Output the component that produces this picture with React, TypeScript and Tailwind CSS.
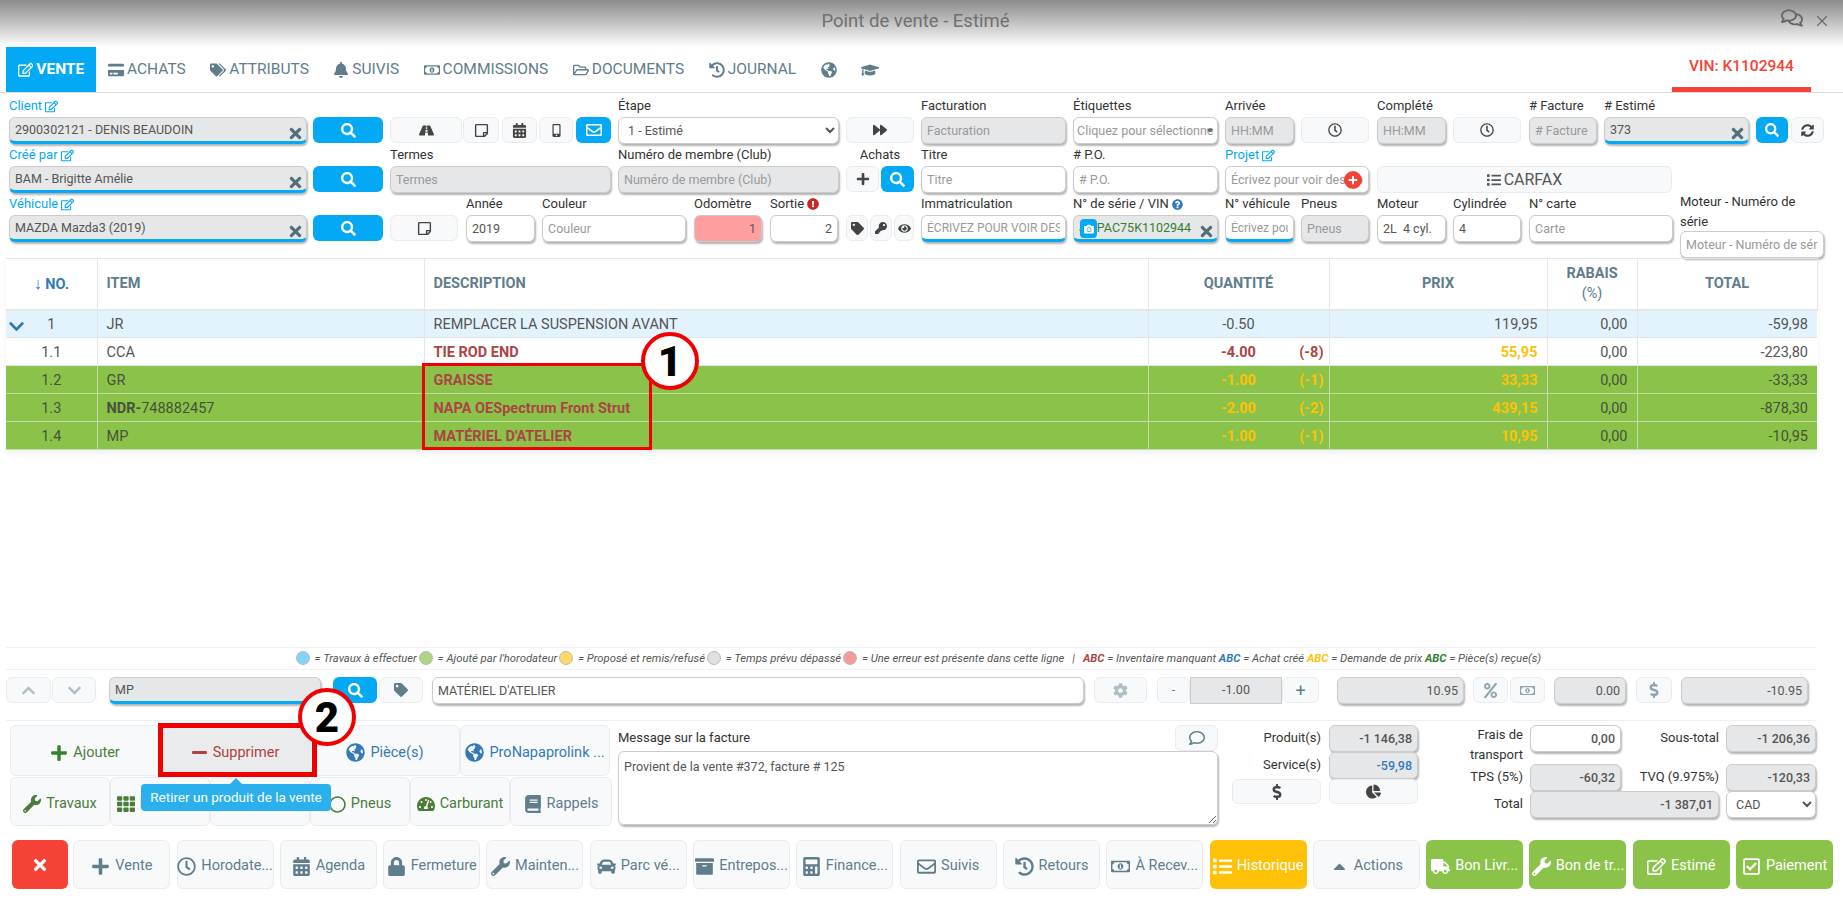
import type { ReactNode } from "react";
import { X } from "lucide-react";
import {
  FaArchive, FaBell, FaBook, FaCalculator, FaCalendarAlt, FaCamera, FaCar, FaCaretDown, FaCaretUp, FaChartPie,
  FaChevronDown, FaChevronUp, FaCog, FaCreditCard, FaDollarSign, FaExclamationCircle, FaEye, FaForward,
  FaGlobeAmericas, FaGraduationCap, FaHistory, FaKey, FaList, FaLock, FaMinus, FaMobileAlt, FaPercent,
  FaPlus, FaQuestionCircle, FaRegCheckSquare, FaRegCircle, FaRegClock, FaRegComment, FaRegComments,
  FaRegEdit, FaRegEnvelope, FaRegFolderOpen, FaRegMoneyBillAlt, FaRegStickyNote, FaRoad, FaSearch,
  FaSyncAlt, FaTachometerAlt, FaTag, FaTags, FaTh, FaTimes, FaTruck, FaWrench,
} from "react-icons/fa";

const inputBare =
  "block h-[27px] rounded-[6px] border border-[#ccc] shadow-[1px_2px_2px_rgba(0,0,0,0.3)] px-[5px] text-[12.5px] text-[#555] placeholder:text-[#999] outline-none";
const inputCls = `${inputBare} w-full`;
const grayCls = "bg-[#e6e7e9]";
const btnCls =
  "flex items-center justify-center rounded-[6px] border border-[#e9ecef] bg-[#f8f9fa] text-[#444]";
const blueBtn = "flex items-center justify-center rounded-[6px] bg-[#03a9f4] text-white";

function Field({ label, className, children }: { label?: ReactNode; className: string; children: ReactNode }) {
  return (
    <div className={className}>
      <div className="h-[22px] text-[13px] leading-[22px] text-[#333] whitespace-nowrap">{label}</div>
      {children}
    </div>
  );
}

function LinkLabel({ text }: { text: string }) {
  return (
    <span className="inline-flex items-center gap-[3px] text-[#03a9f4]">
      {text} <FaRegEdit className="text-[13px]" />
    </span>
  );
}

function Picker({ value }: { value: string }) {
  return (
    <div className="relative">
      <input readOnly value={value} className={`${inputCls} ${grayCls} border-b-[3px] border-b-[#03a9f4] pr-[22px]`} />
      <FaTimes className="absolute right-[3px] top-[8px] text-[17px] text-[#546e7a]" />
    </div>
  );
}

function Tab({ icon, label }: { icon: ReactNode; label?: string }) {
  return (
    <div className="flex items-center gap-[3px] text-[15.5px] text-[#607d8b] whitespace-nowrap">
      <span className="text-[16px]">{icon}</span>
      {label}
    </div>
  );
}

type Line = {
  no: string;
  item: ReactNode;
  desc: string;
  qty: string;
  extra?: string;
  price: string;
  total: string;
  tone: "blue" | "white" | "green";
};

const lines: Line[] = [
  { no: "1", item: "JR", desc: "REMPLACER LA SUSPENSION AVANT", qty: "-0.50", price: "119,95", total: "-59,98", tone: "blue" },
  { no: "1.1", item: "CCA", desc: "TIE ROD END", qty: "-4.00", extra: "(-8)", price: "55,95", total: "-223,80", tone: "white" },
  { no: "1.2", item: "GR", desc: "GRAISSE", qty: "-1.00", extra: "(-1)", price: "33,33", total: "-33,33", tone: "green" },
  { no: "1.3", item: <><b>NDR-</b>748882457</>, desc: "NAPA OESpectrum Front Strut", qty: "-2.00", extra: "(-2)", price: "439,15", total: "-878,30", tone: "green" },
  { no: "1.4", item: "MP", desc: "MATÉRIEL D'ATELIER", qty: "-1.00", extra: "(-1)", price: "10,95", total: "-10,95", tone: "green" },
];

function LinesTable() {
  return (
    <table className="ml-[6px] w-[1811px] table-fixed border-collapse text-[14.5px] text-[#555] shadow-[0_4px_6px_rgba(0,0,0,0.06)]">
      <colgroup>
        <col className="w-[91px]" />
        <col className="w-[327px]" />
        <col className="w-[724px]" />
        <col className="w-[181px]" />
        <col className="w-[218px]" />
        <col className="w-[90px]" />
        <col className="w-[180px]" />
      </colgroup>
      <thead>
        <tr className="h-[51px] border-t border-b-[2px] border-[#e4e7ea] text-[14.5px] font-bold text-[#607d8b]">
          <th className="border-r border-[#e4e7ea] text-center font-bold">
            <span className="text-[#337ab7]"><span className="font-normal text-[16px]">↓</span> NO.</span>
          </th>
          <th className="border-r border-[#e4e7ea] px-[9px] text-left font-bold">ITEM</th>
          <th className="border-r border-[#e4e7ea] px-[9px] text-left font-bold">DESCRIPTION</th>
          <th className="border-r border-[#e4e7ea] text-center font-bold">QUANTITÉ</th>
          <th className="border-r border-[#e4e7ea] text-center font-bold">PRIX</th>
          <th className="border-r border-[#e4e7ea] text-center font-bold leading-[20px]">
            RABAIS<br /><span className="font-normal">(%)</span>
          </th>
          <th className="border-r border-[#e4e7ea] text-center font-bold">TOTAL</th>
        </tr>
      </thead>
      <tbody className="[&_td]:pt-[2px]">
        {lines.map((l) => {
          const green = l.tone === "green";
          const rowBg = green ? "bg-[#8bc34a] border-[#c5dca8] text-[#47513b]" : l.tone === "blue" ? "bg-[#e3f3fd] border-[#dfe5ea]" : "bg-white border-[#dfe5ea]";
          const cellLine = green ? "border-r border-[#c5dca8]" : "border-r border-[#e4e7ea]";
          const redDesc = l.tone !== "blue";
          return (
            <tr key={l.no} className={`h-[28px] border-b ${rowBg}`}>
              <td className={`relative ${cellLine} text-center`}>
                {l.tone === "blue" && <FaChevronDown className="absolute left-[2px] top-[7px] text-[17px] text-[#2a7ab8]" />}
                {l.no}
              </td>
              <td className={`${cellLine} px-[9px]`}>{l.item}</td>
              <td className={`${cellLine} px-[9px] ${redDesc ? "font-bold text-[#ab4545]" : ""}`}>{l.desc}</td>
              <td className={`${cellLine} pr-[5px] pl-[5px]`}>
                <div className={`grid grid-cols-[1fr_auto_1fr] ${l.extra ? (green ? "font-bold text-[#ffc107]" : "font-bold text-[#ab4545]") : ""}`}>
                  <span />
                  <span>{l.qty}</span>
                  <span className="justify-self-end">{l.extra}</span>
                </div>
              </td>
              <td className={`${cellLine} px-[9px] text-right ${l.extra ? "font-bold text-[#ffc107]" : ""}`}>{l.price}</td>
              <td className={`${cellLine} px-[9px] text-right`}>0,00</td>
              <td className="px-[9px] text-right">{l.total}</td>
            </tr>
          );
        })}
      </tbody>
    </table>
  );
}

function Legend() {
  const dot = "inline-block w-[14px] h-[14px] rounded-full border border-[#bbb] mx-[2px] align-[-3px]";
  return (
    <div className="mt-auto ml-[6px] h-[23px] w-[1811px] border-y border-[#f0f0f0] pl-[12px] text-center text-[11.3px] leading-[21px] italic text-[#555]">
      <span className={`${dot} bg-[#81d4fa]`} /> = Travaux à effectuer
      <span className={`${dot} bg-[#aed581]`} /> = Ajouté par l'horodateur
      <span className={`${dot} bg-[#ffd966]`} /> = Proposé et remis/refusé
      <span className={`${dot} bg-[#e0e0e0]`} /> = Temps prévu dépassé
      <span className={`${dot} bg-[#f59a9a]`} /> = Une erreur est présente dans cette ligne
      <span className="mx-[8px]">|</span>
      <b className="text-[#ab4545]">ABC</b> = Inventaire manquant <b className="text-[#337ab7]">ABC</b> = Achat créé{" "}
      <b className="text-[#ffc107]">ABC</b> = Demande de prix <b className="text-[#33802f]">ABC</b> = Pièce(s) reçue(s)
    </div>
  );
}

function ItemRow() {
  const right = `${inputBare} ${grayCls} text-right`;
  return (
    <div className="mt-[7px] flex h-[27px] items-start pl-[6px] text-[12.5px] [&>*]:shrink-0">
      <div className={`${btnCls} h-[26px] w-[45px] text-[15px] !text-[#b0bec5]`}><FaChevronUp /></div>
      <div className={`${btnCls} ml-px h-[26px] w-[44px] text-[15px] !text-[#b0bec5]`}><FaChevronDown /></div>
      <input readOnly value="MP" className={`${inputBare} ${grayCls} ml-[13px] w-[212px] border-b-[3px] border-b-[#03a9f4]`} />
      <div className={`${blueBtn} ml-[12px] h-[26px] w-[44px] text-[15px]`}><FaSearch /></div>
      <div className={`${btnCls} ml-[2px] h-[26px] w-[44px] text-[14px] !text-[#607d8b]`}><FaTag /></div>
      <input readOnly value="MATÉRIEL D'ATELIER" className={`${inputBare} ml-[9px] w-[652px] bg-white`} />
      <div className={`${btnCls} ml-[10px] h-[26px] w-[53px] text-[15px] !text-[#b0bec5]`}><FaCog /></div>
      <div className={`${btnCls} ml-[10px] h-[26px] w-[33px] !text-[#607d8b]`}>-</div>
      <div className="flex h-[27px] w-[92px] items-center justify-center border border-[#ccc] bg-[#e6e7e9] text-[#555]">-1.00</div>
      <div className={`${btnCls} h-[26px] w-[37px] text-[18px] !text-[#607d8b]`}>+</div>
      <input readOnly value="10.95" className={`${right} ml-[18px] w-[127px]`} />
      <div className={`${btnCls} ml-[9px] h-[26px] w-[35px] text-[15px] !text-[#90a4ae]`}><FaPercent /></div>
      <div className={`${btnCls} ml-[2px] h-[26px] w-[35px] text-[15px] !text-[#90a4ae]`}><FaRegMoneyBillAlt /></div>
      <input readOnly value="0.00" className={`${right} ml-[9px] w-[72px]`} />
      <div className={`${btnCls} ml-[10px] h-[26px] w-[36px] text-[16px] !text-[#90a4ae]`}><FaDollarSign /></div>
      <input readOnly value="-10.95" className={`${right} ml-[9px] w-[127px]`} />
    </div>
  );
}

function ActionBtn({ icon, label, className }: { icon: ReactNode; label: string; className: string }) {
  return (
    <div className={`${btnCls} gap-[5px] whitespace-nowrap text-[14.5px] ${className}`}>
      {icon}
      {label}
    </div>
  );
}

function ProductPanel() {
  const green = "h-full w-[100px] pt-[5px] !text-[#4a7c3a]";
  const wide = "h-full w-[150px] pt-[4px]";
  return (
    <div className="ml-[10px] w-[602px]">
      <div className="flex h-[51px]">
        <ActionBtn className={`${wide} !text-[#4a7c3a]`} icon={<FaPlus className="text-[18px] text-[#33802f]" />} label="Ajouter" />
        <ActionBtn className={`${wide} !bg-[#e9ebed] !text-[#b0413e]`} icon={<FaMinus className="text-[17px]" />} label="Supprimer" />
        <ActionBtn className={`${wide} !text-[#337ab7]`} icon={<FaGlobeAmericas className="text-[19px]" />} label="Pièce(s)" />
        <ActionBtn className={`${wide} !text-[#337ab7]`} icon={<FaGlobeAmericas className="text-[19px]" />} label="ProNapaprolink ..." />
      </div>
      <div className="mt-px flex h-[49px]">
        <ActionBtn className={green} icon={<FaWrench className="text-[18px]" />} label="Travaux" />
        <ActionBtn className={green} icon={<FaTh className="text-[18px]" />} label="Ensemb..." />
        <ActionBtn className={green} icon={<FaCar className="text-[18px]" />} label="Véhicul..." />
        <ActionBtn className={green} icon={<FaRegCircle className="text-[17px]" />} label="Pneus" />
        <ActionBtn className={green} icon={<FaTachometerAlt className="text-[18px]" />} label="Carburant" />
        <ActionBtn className="h-full w-[102px] pt-[5px] !text-[#607d8b]" icon={<FaBook className="text-[18px]" />} label="Rappels" />
      </div>
    </div>
  );
}

function MessagePanel() {
  return (
    <div className="ml-[6px] w-[600px]">
      <div className="flex h-[26px] items-center justify-between">
        <span className="text-[13px] text-[#333]">Message sur la facture</span>
        <div className={`${btnCls} h-[26px] w-[43px] text-[16px] !text-[#607d8b]`}><FaRegComment /></div>
      </div>
      <textarea
        readOnly
        value="Provient de la vente #372, facture # 125"
        className="block h-[74px] w-full resize-y rounded-[6px] border border-[#ccc] px-[5px] py-[6px] text-[12.5px] text-[#555] shadow-[1px_2px_2px_rgba(0,0,0,0.3)] outline-none"
      />
    </div>
  );
}

function TotalsPanel() {
  const val = `${inputCls} ${grayCls} text-right font-medium`;
  const lbl = "text-right text-[13px] text-[#333]";
  return (
    <>
      <div className="ml-[14px] grid w-[186px] grid-cols-[89px_89px] content-start gap-x-[8px] text-[13px]">
        <div className={`${lbl} leading-[26px]`}>Produit(s)</div>
        <input readOnly value="-1 146,38" className={val} />
        <div className={`${lbl} leading-[26px]`}>Service(s)</div>
        <input readOnly value="-59,98" className={`${val} !text-[#337ab7]`} />
        <div className={`${btnCls} h-[25px] text-[16px]`}><FaDollarSign /></div>
        <div className={`${btnCls} h-[25px] text-[15px]`}><FaChartPie /></div>
      </div>
      <div className="ml-[27px] grid grid-cols-[78px_91px_91px_90px] grid-rows-[39px_27px_27px] gap-x-[7px] text-[13px]">
        <div className={`${lbl} leading-[20px]`}>Frais de transport</div>
        <input readOnly value="0,00" className={`${inputCls} bg-white text-right font-medium`} />
        <div className={`${lbl} leading-[26px]`}>Sous-total</div>
        <input readOnly value="-1 206,36" className={val} />
        <div className={`${lbl} leading-[26px]`}>TPS (5%)</div>
        <input readOnly value="-60,32" className={val} />
        <div className={`${lbl} leading-[26px]`}>TVQ (9.975%)</div>
        <input readOnly value="-120,33" className={val} />
        <div className={`${lbl} leading-[26px]`}>Total</div>
        <input readOnly value="-1 387,01" className={`${val} col-span-2`} />
        <select className={`${inputCls} bg-white`}><option>CAD</option></select>
      </div>
    </>
  );
}

function ToolBtn({ icon, label, tone = "plain", w = "w-[97px]" }: { icon: ReactNode; label: string; tone?: "plain" | "green" | "amber"; w?: string }) {
  const colors =
    tone === "green"
      ? "bg-[#8bc34a] text-white"
      : tone === "amber"
        ? "bg-[#ffc107] text-white"
        : "border border-[#e9ecef] bg-[#f8f9fa] text-[#607d8b]";
  return (
    <div className={`flex h-[49px] items-center justify-center gap-[5px] whitespace-nowrap rounded-[6px] pt-[3px] text-[14.5px] ${w} ${colors}`}>
      <span className="text-[19px]">{icon}</span>
      {label}
    </div>
  );
}

function Toolbar() {
  return (
    <div className="mt-[14px] flex h-[49px] gap-[6.3px] pl-[12px]">
      <div className="mr-[-1px] flex h-[49px] w-[56px] items-center justify-center rounded-[6px] bg-[#f44336] text-[18px] text-white"><FaTimes /></div>
      <ToolBtn icon={<FaPlus />} label="Vente" />
      <ToolBtn icon={<FaRegClock />} label="Horodate..." />
      <ToolBtn icon={<FaCalendarAlt />} label="Agenda" />
      <ToolBtn icon={<FaLock />} label="Fermeture" />
      <ToolBtn icon={<FaWrench />} label="Mainten..." />
      <ToolBtn icon={<FaCar />} label="Parc vé..." />
      <ToolBtn icon={<FaArchive />} label="Entrepos..." />
      <ToolBtn icon={<FaCalculator />} label="Finance..." />
      <ToolBtn icon={<FaRegEnvelope />} label="Suivis" />
      <ToolBtn icon={<FaHistory />} label="Retours" />
      <ToolBtn icon={<FaRegMoneyBillAlt />} label="À Recev..." />
      <ToolBtn icon={<FaList />} label="Historique" tone="amber" />
      <ToolBtn icon={<FaCaretUp />} label="Actions" w="w-[107px]" />
      <ToolBtn icon={<FaTruck />} label="Bon Livr..." tone="green" />
      <ToolBtn icon={<FaWrench />} label="Bon de tr..." tone="green" />
      <ToolBtn icon={<FaRegEdit />} label="Estimé" tone="green" />
      <ToolBtn icon={<FaRegCheckSquare />} label="Paiement" tone="green" />
    </div>
  );
}

export default function App() {
  const gray = `${inputCls} ${grayCls}`;
  const white = `${inputCls} bg-white`;
  return (
    <div className="relative flex h-[899px] w-[1843px] flex-col overflow-hidden bg-white font-['Roboto',sans-serif]">
      {/* Title bar */}
      <div className="relative flex h-[47px] items-start justify-center bg-gradient-to-b from-[#8c8c8c] to-white pt-[8px] pr-[12px] text-[18.5px] text-[#707070]">
        Point de vente - Estimé
        <div className="absolute right-[12px] top-[7px] flex items-start gap-[10px] text-[#666]">
          <FaRegComments className="text-[22px]" />
          <X className="mt-[5px] h-[18px] w-[18px]" strokeWidth={1.5} />
        </div>
      </div>

      {/* Tabs */}
      <div className="flex h-[46px] items-center border-b-[1px] border-[#ddd] pl-[6px]">
        <div className="flex h-[45px] w-[90px] items-center justify-center gap-[3px] bg-[#03a9f4] pt-[1px] text-[15.5px] font-bold text-white">
          <FaRegEdit /> VENTE
        </div>
        <div className="ml-[12px] flex items-center gap-[24.5px] pt-[1px]">
          <Tab icon={<FaCreditCard />} label="ACHATS" />
          <Tab icon={<FaTags />} label="ATTRIBUTS" />
          <Tab icon={<FaBell />} label="SUIVIS" />
          <Tab icon={<FaRegMoneyBillAlt />} label="COMMISSIONS" />
          <Tab icon={<FaRegFolderOpen />} label="DOCUMENTS" />
          <Tab icon={<FaHistory />} label="JOURNAL" />
          <Tab icon={<FaGlobeAmericas />} />
          <Tab icon={<FaGraduationCap className="text-[18px]" />} />
        </div>
        <div className="ml-auto mr-[32px] flex h-[45px] w-[139px] items-center justify-center border-b-[5px] border-[#f44336] text-[15.5px] font-medium text-[#f44336]">
          VIN: K1102944
        </div>
      </div>

      {/* Form */}
      <div className="mt-[2px] flex h-[49px] items-start pl-[9px]">
        <Field className="w-[298px]" label={<LinkLabel text="Client" />}><Picker value="2900302121 - DENIS BEAUDOIN" /></Field>
        <Field className="ml-[6px] w-[70px]"><div className={`${blueBtn} h-[26px] text-[15px]`}><FaSearch /></div></Field>
        <Field className="ml-[7px] w-[72px]"><div className={`${btnCls} h-[26px] text-[15px]`}><FaRoad /></div></Field>
        <Field className="ml-px w-[36px]"><div className={`${btnCls} h-[26px] text-[15px]`}><FaRegStickyNote /></div></Field>
        <Field className="ml-[3px] w-[35px]"><div className={`${btnCls} h-[26px] text-[15px]`}><FaCalendarAlt /></div></Field>
        <Field className="ml-[2px] w-[34px]"><div className={`${btnCls} h-[26px] text-[13px]`}><FaMobileAlt /></div></Field>
        <Field className="ml-[3px] w-[35px]"><div className={`${blueBtn} h-[26px] text-[16px]`}><FaRegEnvelope /></div></Field>
        <Field className="ml-[7px] w-[221px]" label="Étape"><select className={white}><option>1 - Estimé</option></select></Field>
        <Field className="ml-[7px] w-[68px]"><div className={`${btnCls} h-[26px] text-[14px]`}><FaForward /></div></Field>
        <Field className="ml-[7px] w-[145px]" label="Facturation"><input readOnly placeholder="Facturation" className={gray} /></Field>
        <Field className="ml-[7px] w-[145px]" label="Étiquettes">
          <div className="relative">
            <input readOnly placeholder="Cliquez pour sélectionner" className={`${white} !px-[3px]`} />
            <FaCaretDown className="absolute right-[3px] top-[8px] text-[10px] text-[#666]" />
          </div>
        </Field>
        <Field className="ml-[7px] w-[69px]" label="Arrivée"><input readOnly placeholder="HH:MM" className={gray} /></Field>
        <Field className="ml-[7px] w-[68px]"><div className={`${btnCls} h-[26px] text-[14px]`}><FaRegClock /></div></Field>
        <Field className="ml-[8px] w-[69px]" label="Complété"><input readOnly placeholder="HH:MM" className={gray} /></Field>
        <Field className="ml-[7px] w-[68px]"><div className={`${btnCls} h-[26px] text-[14px]`}><FaRegClock /></div></Field>
        <Field className="ml-[8px] w-[68px]" label="# Facture"><input readOnly placeholder="# Facture" className={gray} /></Field>
        <Field className="ml-[7px] w-[145px]" label="# Estimé"><Picker value="373" /></Field>
        <Field className="ml-[7px] w-[32px]"><div className={`${blueBtn} h-[26px] text-[14px]`}><FaSearch /></div></Field>
        <Field className="ml-[3px] w-[33px]"><div className={`${btnCls} h-[26px] text-[13px]`}><FaSyncAlt /></div></Field>
      </div>
      <div className="flex h-[49px] items-start pl-[9px]">
        <Field className="w-[298px]" label={<LinkLabel text="Créé par" />}><Picker value="BAM - Brigitte Amélie" /></Field>
        <Field className="ml-[6px] w-[70px]"><div className={`${blueBtn} h-[26px] text-[15px]`}><FaSearch /></div></Field>
        <Field className="ml-[7px] w-[221px]" label="Termes"><input readOnly placeholder="Termes" className={gray} /></Field>
        <Field className="ml-[7px] w-[221px]" label="Numéro de membre (Club)"><input readOnly placeholder="Numéro de membre (Club)" className={gray} /></Field>
        <Field className="ml-[7px] w-[68px]" label={<div className="text-center">Achats</div>}>
          <div className="flex gap-[2px]">
            <div className={`${btnCls} h-[26px] w-[33px] text-[14px]`}><FaPlus /></div>
            <div className={`${blueBtn} h-[26px] w-[33px] text-[15px]`}><FaSearch /></div>
          </div>
        </Field>
        <Field className="ml-[7px] w-[145px]" label="Titre"><input readOnly placeholder="Titre" className={white} /></Field>
        <Field className="ml-[7px] w-[145px]" label="# P.O."><input readOnly placeholder="# P.O." className={white} /></Field>
        <Field className="ml-[7px] w-[144px]" label={<LinkLabel text="Projet" />}>
          <div className="relative">
            <input readOnly placeholder="Écrivez pour voir des options" className={white} />
            <span className="absolute right-[7px] top-[5px] flex h-[18px] w-[18px] items-center justify-center rounded-full bg-[#f44336] text-[10px] text-white"><FaPlus /></span>
          </div>
        </Field>
        <Field className="ml-[8px] w-[295px]"><div className={`${btnCls} h-[27px] gap-[3px] text-[16px] !text-[#555]`}><FaList className="text-[14px]" /> CARFAX</div></Field>
      </div>
      <div className="flex items-start pl-[9px]">
        <Field className="w-[298px]" label={<LinkLabel text="Véhicule" />}><Picker value="MAZDA Mazda3 (2019)" /></Field>
        <Field className="ml-[6px] w-[70px]"><div className={`${blueBtn} h-[26px] text-[15px]`}><FaSearch /></div></Field>
        <Field className="ml-[7px] w-[68px]"><div className={`${btnCls} h-[26px] text-[15px]`}><FaRegStickyNote /></div></Field>
        <Field className="ml-[8px] w-[69px]" label="Année"><input readOnly value="2019" className={white} /></Field>
        <Field className="ml-[7px] w-[144px]" label="Couleur"><input readOnly placeholder="Couleur" className={white} /></Field>
        <Field className="ml-[8px] w-[68px]" label="Odomètre"><input readOnly value="1" className={`${inputCls} bg-[#ff9e9e] text-right`} /></Field>
        <Field className="ml-[8px] w-[68px]" label={<span className="inline-flex items-center gap-[3px]">Sortie <FaExclamationCircle className="text-[12px] text-[#c62828]" /></span>}>
          <input readOnly value="2" className={`${white} text-right`} />
        </Field>
        <Field className="ml-[8px] w-[68px]">
          <div className="flex gap-[2px]">
            <div className={`${btnCls} h-[26px] w-[22px] text-[13px]`}><FaTag /></div>
            <div className={`${btnCls} h-[26px] w-[22px] text-[12px]`}><FaKey /></div>
            <div className={`${btnCls} h-[26px] w-[20px] text-[13px]`}><FaEye /></div>
          </div>
        </Field>
        <Field className="ml-[7px] w-[145px]" label="Immatriculation">
          <input readOnly placeholder="ÉCRIVEZ POUR VOIR DES OPTIONS" className={`${white} border-b-[3px] border-b-[#03a9f4] !text-[12px]`} />
        </Field>
        <Field className="ml-[7px] w-[145px]" label={<span className="inline-flex items-center gap-[3px]">N° de série / VIN <FaQuestionCircle className="text-[11px] text-[#337ab7]" /></span>}>
          <div className="relative">
            <input readOnly value="JMPAC75K1102944" className={`${gray} border-b-[3px] border-b-[#03a9f4] !text-[#33802f]`} />
            <span className="absolute left-[7px] top-[4px] flex h-[19px] w-[17px] items-center justify-center rounded-[4px] bg-[#03a9f4] text-[10px] text-white"><FaCamera /></span>
            <FaTimes className="absolute right-[3px] top-[8px] text-[17px] text-[#546e7a]" />
          </div>
        </Field>
        <Field className="ml-[7px] w-[69px]" label="N° véhicule">
          <input readOnly placeholder="Écrivez pour voir" className={`${white} border-b-[3px] border-b-[#03a9f4] !text-[12px]`} />
        </Field>
        <Field className="ml-[7px] w-[68px]" label="Pneus"><input readOnly placeholder="Pneus" className={gray} /></Field>
        <Field className="ml-[8px] w-[69px]" label="Moteur"><input readOnly value="2L  4 cyl." className={white} /></Field>
        <Field className="ml-[7px] w-[68px]" label="Cylindrée"><input readOnly value="4" className={white} /></Field>
        <Field className="ml-[8px] w-[144px]" label="N° carte"><input readOnly placeholder="Carte" className={white} /></Field>
        <div className="-mt-[1px] ml-[7px] w-[144px]">
          <div className="h-[39px] text-[13px] leading-[20px] text-[#333]">Moteur - Numéro de série</div>
          <input readOnly placeholder="Moteur - Numéro de série" className={white} />
        </div>
      </div>

      <LinesTable />
      <Legend />
      <ItemRow />
      <div className="mt-[16px] ml-[6px] w-[1811px] border-t border-[#f0f0f0]" />

      <div className="mt-[4px] flex h-[101px] items-start">
        <ProductPanel />
        <MessagePanel />
        <TotalsPanel />
      </div>

      <Toolbar />
      <div className="h-[10px]" />

      {/* Annotations over the screenshot */}
      <div className="absolute left-[422px] top-[363px] h-[87px] w-[230px] border-[3px] border-[#f00000]" />
      <div className="absolute left-[641px] top-[332px] flex h-[58px] w-[58px] items-center justify-center rounded-full border-[4px] border-[#f00000] bg-white text-[42px] font-black text-black">1</div>
      <div className="absolute left-[158px] top-[723px] h-[54px] w-[159px] border-[5px] border-[#f00000]" />
      <div className="absolute left-[298px] top-[688px] flex h-[58px] w-[58px] items-center justify-center rounded-full border-[4px] border-[#f00000] bg-white text-[42px] font-black text-black">2</div>
      <div className="absolute left-[141px] top-[784px] flex h-[27px] w-[190px] items-center justify-center rounded-[4px] bg-[#2bb0ee] text-[13.5px] text-white">Retirer un produit de la vente</div>
      <div className="absolute left-[230px] top-[778px] h-0 w-0 border-x-[6px] border-b-[6px] border-x-transparent border-b-[#2bb0ee]" />
    </div>
  );
}
